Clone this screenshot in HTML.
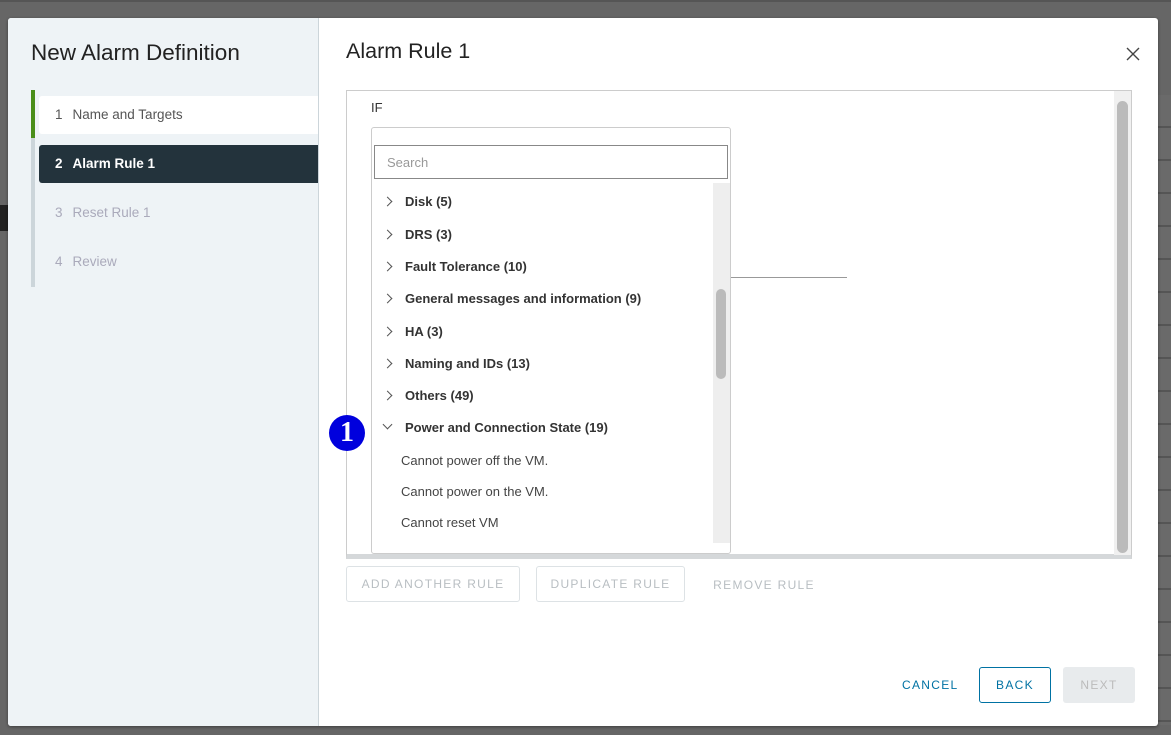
<!DOCTYPE html>
<html><head><style>
*{box-sizing:border-box;margin:0;padding:0}
body{width:1171px;height:735px;background:#666;font-family:"Liberation Sans",sans-serif;position:relative;overflow:hidden}
.a{position:absolute}
.modal{left:8px;top:18px;width:1150px;height:708px;background:#fff;border-radius:3px;overflow:hidden;box-shadow:0 1px 3px rgba(0,0,0,.4)}
.left{left:0;top:0;width:311px;height:708px;background:#eef3f6;border-right:1px solid #ccd5da}
.step{position:absolute;left:31px;width:279px;height:38px;font-size:13.5px;line-height:38px;padding-left:16px}
.row{position:absolute;left:33px;font-size:13px;font-weight:bold;color:#333}
.chev{position:absolute;left:12px;width:7px;height:7px;border-right:1.5px solid #555;border-top:1.5px solid #555;transform:rotate(45deg)}
.btn{position:absolute;border:1px solid #dde2e5;border-radius:3px;font-size:12px;letter-spacing:1.3px;color:#b8bec2;text-align:center;line-height:34px}
</style></head><body>
<div class="a" style="left:0;top:0;width:1171px;height:2px;background:#555"></div>
<div class="a" style="left:0;top:205px;width:8px;height:26px;background:#222"></div>
<div class="a" style="left:1158px;top:95px;width:13px;height:630px;background:repeating-linear-gradient(#6a6a6a 0 31px,#555 31px 33px)"></div>
<div class="a modal">
 <div class="a left">
  <div class="a" style="left:23px;top:22px;font-size:22.5px;color:#222">New Alarm Definition</div>
  <div class="a" style="left:23px;top:72px;width:4px;height:197px;background:#ccd5da"></div>
  <div class="a" style="left:23px;top:72px;width:4px;height:48px;background:#4a8e1a"></div>
  <div class="step" style="top:78px;background:#fff;color:#555;border-radius:3px 0 0 3px"><span style="margin-right:10px">1</span>Name and Targets</div>
  <div class="step" style="top:127px;background:#23333c;color:#fff;font-weight:bold;border-radius:3px 0 0 3px"><span style="margin-right:10px">2</span>Alarm Rule 1</div>
  <div class="step" style="top:176px;color:#aab">3<span style="margin-left:10px">Reset Rule 1</span></div>
  <div class="step" style="top:225px;color:#aab">4<span style="margin-left:10px">Review</span></div>
 </div>
 <div class="a" style="left:338px;top:21px;font-size:21.5px;color:#222">Alarm Rule 1</div>
 <svg class="a" style="left:1118px;top:29px" width="14" height="14" viewBox="0 0 14 14"><path d="M1 1L13 13M13 1L1 13" stroke="#444" stroke-width="1.4"/></svg>
 <div class="a" style="left:338px;top:72px;width:786px;height:469px;border:1px solid #ccc;border-bottom:5px solid #d5d8da">
  <div class="a" style="left:24px;top:9px;font-size:13px;color:#333">IF</div>
  <div class="a" style="left:383px;top:186px;width:117px;height:1px;background:#999"></div>
  <div class="a" style="left:767px;top:0;width:17px;height:464px;background:#f0f0f0"></div>
  <div class="a" style="left:770px;top:10px;width:11px;height:452px;background:#bbb;border-radius:6px"></div>
 </div>
 <div class="a" style="left:363px;top:109px;width:360px;height:427px;background:#fff;border:1px solid #ccc;border-radius:3px;overflow:hidden">
  <div class="a" style="left:2px;top:17px;width:354px;height:34px;border:1px solid #888"></div>
  <div class="a" style="left:15px;top:27px;font-size:13px;color:#999">Search</div>
  <div class="a" style="left:341px;top:55px;width:18px;height:360px;background:#eee"></div>
  <div class="a" style="left:344px;top:161px;width:10px;height:90px;background:#bbb;border-radius:5px"></div>
  <div style="position:absolute;left:0;top:0;width:340px">
   <div class="chev" style="top:70px"></div><div class="row" style="top:66px">Disk (5)</div>
   <div class="chev" style="top:103px"></div><div class="row" style="top:99px">DRS (3)</div>
   <div class="chev" style="top:135px"></div><div class="row" style="top:131px">Fault Tolerance (10)</div>
   <div class="chev" style="top:167px"></div><div class="row" style="top:163px">General messages and information (9)</div>
   <div class="chev" style="top:200px"></div><div class="row" style="top:196px">HA (3)</div>
   <div class="chev" style="top:232px"></div><div class="row" style="top:228px">Naming and IDs (13)</div>
   <div class="chev" style="top:264px"></div><div class="row" style="top:260px">Others (49)</div>
   <div class="chev" style="top:293px;transform:rotate(135deg)"></div><div class="row" style="top:292px">Power and Connection State (19)</div>
   <div class="a" style="left:29px;top:325px;font-size:13px;color:#444">Cannot power off the VM.</div>
   <div class="a" style="left:29px;top:356px;font-size:13px;color:#444">Cannot power on the VM.</div>
   <div class="a" style="left:29px;top:387px;font-size:13px;color:#444">Cannot reset VM</div>
  </div>
 </div>
 <div class="a" style="left:321px;top:397px;width:36px;height:36px;border-radius:50%;background:#0000dd;color:#fff;font:bold 28px/36px 'Liberation Serif',serif;text-align:center">1</div>
 <div class="btn" style="left:338px;top:548px;width:174px;height:36px">ADD ANOTHER RULE</div>
 <div class="btn" style="left:528px;top:548px;width:149px;height:36px">DUPLICATE RULE</div>
 <div class="btn" style="left:691px;top:550px;width:130px;height:36px;border:none">REMOVE RULE</div>
 <div class="a" style="left:894px;top:660px;font-size:12px;letter-spacing:1.3px;color:#0072a3">CANCEL</div>
 <div class="a" style="left:971px;top:649px;width:72px;height:36px;border:1px solid #0072a3;border-radius:3px;font-size:12px;letter-spacing:1.3px;color:#0072a3;text-align:center;line-height:34px">BACK</div>
 <div class="a" style="left:1055px;top:649px;width:72px;height:36px;background:#e8ebed;border-radius:3px;font-size:12px;letter-spacing:1.3px;color:#bbb;text-align:center;line-height:36px">NEXT</div>
</div>
</body></html>
